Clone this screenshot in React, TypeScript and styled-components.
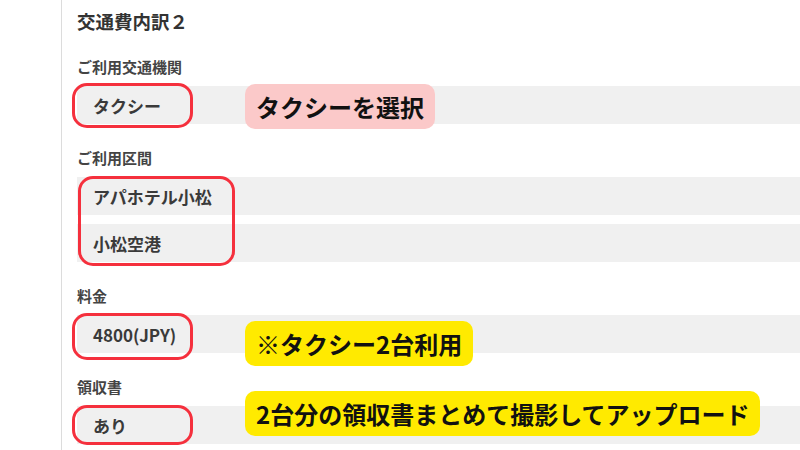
import React from 'react';
import styled, { createGlobalStyle } from 'styled-components';

const GlobalStyle = createGlobalStyle`
  html, body {
    margin: 0;
    padding: 0;
    background: #ffffff;
    font-family: "Noto Sans CJK JP", "Noto Sans", sans-serif;
  }
`;

const Page = styled.div`
  width: 800px;
  height: 450px;
  overflow: hidden;
  padding-left: 61px;
  box-sizing: border-box;
  background: #ffffff;
`;

const Panel = styled.section`
  height: 100%;
  border-left: 1px solid #dcdcdc;
  padding: 8px 0 0 15px;
  box-sizing: border-box;
`;

const Title = styled.h2`
  margin: 0 0 23px 0;
  font-size: 18.5px;
  line-height: 26px;
  font-weight: 700;
  color: #333333;
`;

const Field = styled.div`
  margin-bottom: 24px;
`;

const Label = styled.div`
  font-size: 15px;
  line-height: 20px;
  font-weight: 700;
  color: #444444;
  margin-bottom: 9px;
`;

// bars of one field; notes and red rings sit over them
const Bars = styled.div`
  position: relative;
  display: flex;
  flex-direction: column;
  gap: 9px;
`;

const Bar = styled.div`
  height: 38px;
  background: #f0f0f0;
  display: flex;
  align-items: center;
  padding-left: 16px;
  font-size: 17px;
  font-weight: 700;
  color: #3a3a3a;
`;

const Ring = styled.div<{ $left: number; $top: number; $w: number; $h: number }>`
  position: absolute;
  left: ${(p) => p.$left}px;
  top: ${(p) => p.$top}px;
  width: ${(p) => p.$w}px;
  height: ${(p) => p.$h}px;
  border: 3.5px solid #f5303d;
  border-radius: 15px;
  box-sizing: border-box;
  pointer-events: none;
`;

const Note = styled.div<{ $tone: 'pink' | 'yellow'; $top: number }>`
  position: absolute;
  left: 168px;
  top: ${(p) => p.$top}px;
  height: 45px;
  line-height: 45px;
  padding: 0 11px;
  border-radius: 10px;
  background: ${(p) => (p.$tone === 'pink' ? '#fbc9c9' : '#ffea00')};
  color: #111111;
  font-size: 24px;
  font-weight: 700;
  white-space: nowrap;
`;

const App: React.FC = () => {
  return (
    <Page>
      <GlobalStyle />
      <Panel>
        <Title>交通費内訳２</Title>

        <Field>
          <Label>ご利用交通機関</Label>
          <Bars>
            <Bar>タクシー</Bar>
            <Ring $left={-5} $top={-3} $w={121} $h={45} />
            <Note $tone="pink" $top={-2}>タクシーを選択</Note>
          </Bars>
        </Field>

        <Field>
          <Label>ご利用区間</Label>
          <Bars>
            <Bar>アパホテル小松</Bar>
            <Bar>小松空港</Bar>
            <Ring $left={1} $top={-1} $w={157} $h={90} />
          </Bars>
        </Field>

        <Field>
          <Label>料金</Label>
          <Bars>
            <Bar>4800(JPY)</Bar>
            <Ring $left={-5} $top={-2} $w={121} $h={47} />
            <Note $tone="yellow" $top={6}>※タクシー2台利用</Note>
          </Bars>
        </Field>

        <Field>
          <Label>領収書</Label>
          <Bars>
            <Bar>あり</Bar>
            <Ring $left={-5} $top={-1} $w={121} $h={40} />
            <Note $tone="yellow" $top={-15}>2台分の領収書まとめて撮影してアップロード</Note>
          </Bars>
        </Field>
      </Panel>
    </Page>
  );
};

export default App;
